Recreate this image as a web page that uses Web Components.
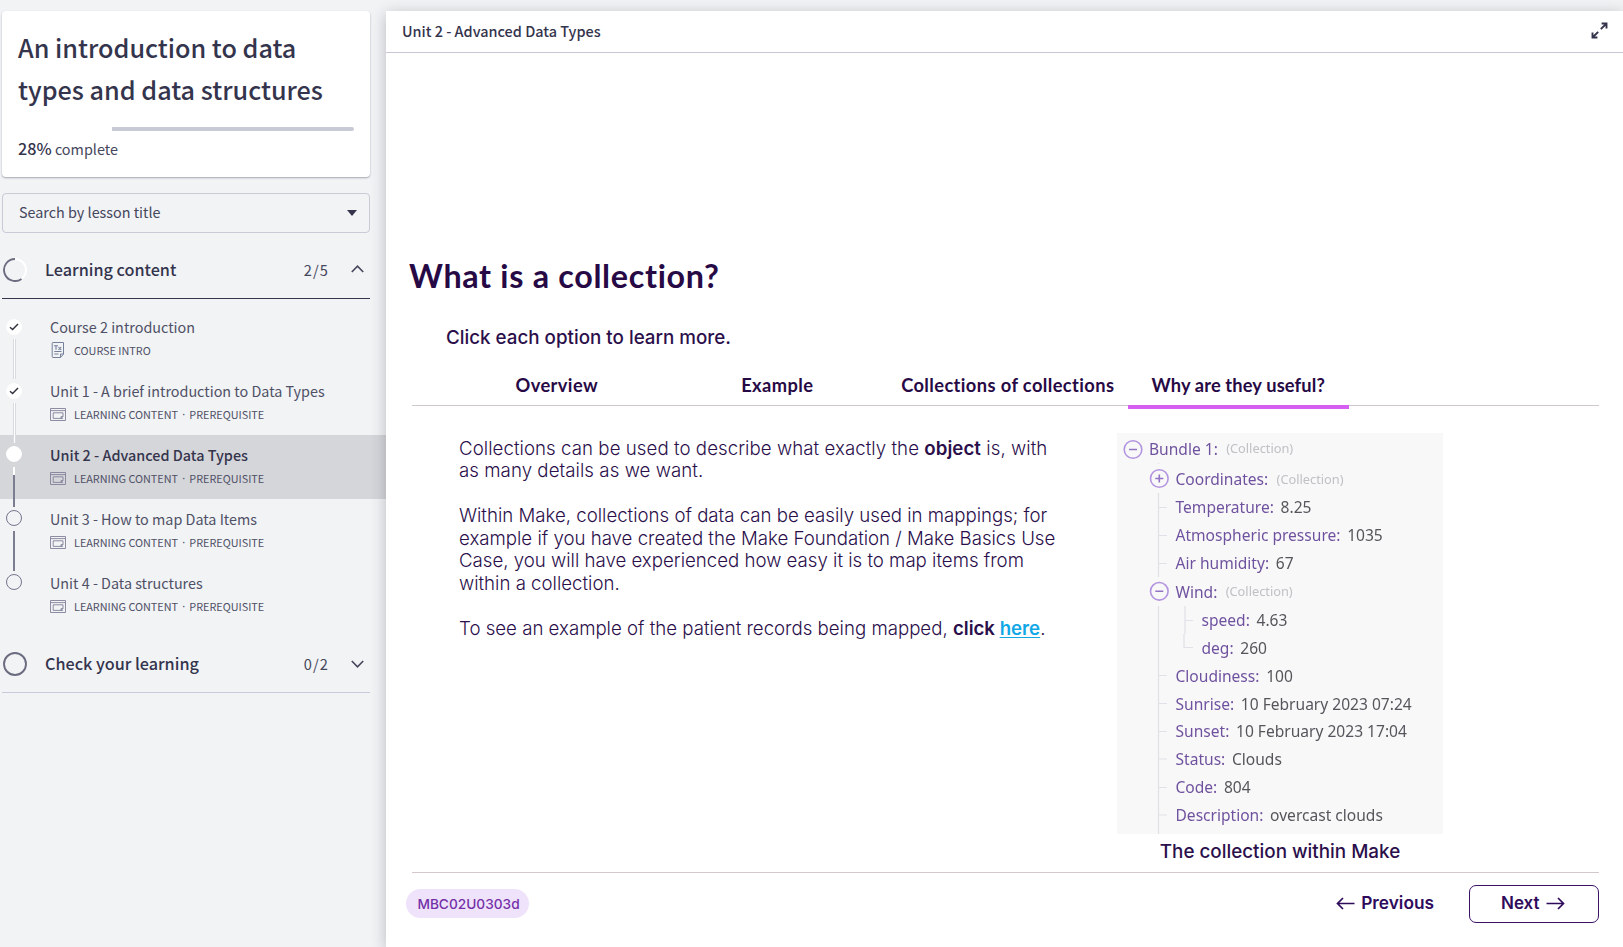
<!DOCTYPE html>
<html lang="en">
<head>
<meta charset="utf-8">
<title>An introduction to data types and data structures</title>
<style>
html,body{margin:0;height:100%;overflow:hidden;background:#f1f3f5}
</style>
</head>
<body>
<course-app></course-app>
<script>
const SANS = '"Noto Sans CJK SC","Noto Sans",sans-serif';
const define = (name, html, setup) => {
  const tpl = document.createElement('template');
  tpl.innerHTML = html;
  customElements.define(name, class extends HTMLElement {
    connectedCallback() {
      if (this.shadowRoot) return;
      const root = this.attachShadow({mode: 'open'});
      root.append(tpl.content.cloneNode(true));
      if (setup) setup(this, root);
    }
  });
};

define('course-card', `
<style>
:host{display:block;box-sizing:border-box;width:368px;height:166px;margin:11px 0 16px 2px;padding:15px 16px 0;background:#fff;border-radius:4px;box-shadow:0 1px 2px rgba(40,42,60,.38)}
h1{margin:0;font-weight:500;font-size:25.2px;line-height:42px;color:#34344d;white-space:nowrap}
.bar{height:4px;margin:17px 0 5px;display:flex}
.bar i{margin-left:94px;flex:1;background:#c8cbd6;border-radius:0 2px 2px 0}
.done{font-size:14.4px;line-height:24px;color:#45465c}
b{font-weight:500;font-size:16.2px;color:#34344d}
</style>
<h1>An introduction to data<br>types and data structures</h1>
<div class="bar"><i></i></div>
<div class="done"><b>28%</b> complete</div>`);

define('lesson-search', `
<style>
:host{display:flex;box-sizing:border-box;align-items:center;justify-content:space-between;width:368px;height:40px;margin-left:2px;padding:0 12px 4px 16px;border:1px solid #c8cad6;border-radius:4px;font-size:14.37px;color:#45465c}
svg{display:block;margin-top:4px}
</style>
<span>Search by lesson title</span>
<svg width="10" height="6"><path d="M0 0h10L5 6z" fill="#34344d"/></svg>`);

define('course-section', `
<style>
:host{display:flex;box-sizing:border-box;align-items:center;width:368px;height:59px;margin:7px 0 0 2px;padding:0 6px 0 1px;border-bottom:1px solid #c8cadc;color:#34344d}
:host([open]){border-color:#34344d}
.ring{margin:2px 18px 0 0}
.name{flex:1;font-size:16.2px;font-weight:500}
.count{font-size:14.6px;letter-spacing:1.1px;margin:0 22px 0 0;color:#45465c}
svg{display:block}
</style>
<svg class="ring" width="24" height="24" fill="none" stroke-width="1.9"></svg>
<span class="name"><slot></slot></span><span class="count"></span>
<svg class="chev" width="13" height="8" fill="none" stroke="#45465c" stroke-width="1.6"><path/></svg>`,
(el, root) => {
  const open = el.hasAttribute('open');
  root.querySelector('.count').textContent = el.getAttribute('count');
  root.querySelector('.chev path').setAttribute('d', open ? 'M.8 7L6.5 1.2 12.2 7' : 'M.8 1L6.5 6.8 12.2 1');
  root.querySelector('.chev').style.marginTop = open ? '0' : '2px';
  root.querySelector('.ring').innerHTML = open
    ? '<circle cx="12" cy="12" r="11" stroke="#fff"/><path d="M12 1A11 11 0 1 0 18.5 20.9" stroke="#6b6c80"/>'
    : '<circle cx="12" cy="12" r="11" stroke="#6b6c80"/>';
});

const LEARNING = '<svg width="16" height="13" fill="none" stroke="#80819a"><path d="M.5.5h15v12H.5zM.5 2.6h15M13 10.400H3.200V4.800H13v3.600l-2 2V8.600h2" stroke-width=".9"/></svg>';
const TEXTDOC = '<svg width="14" height="16" fill="none" stroke="#75809a"><path d="M2 .5h10.5v11.6l-3 3.400H2a.8.8 0 0 1-.8-.8V1.300A.8.8 0 0 1 2 .5zM9.500 15.300V12h3M3.300 9.500h7.200M3.300 12h4.200" /><path d="M3 3.700h4M5 3.700v4M7.500 5.200l2.700 2.700M10.200 5.200L7.500 7.900" stroke-width="1.100"/></svg>';

define('lesson-item', `
<style>
:host{display:flex;box-sizing:border-box;position:relative;width:386px;height:64px;padding:10px 0 0 6px;color:#4f5066}
:host([current]){background:#d5d6da}
.dot{flex:none;width:16px;height:16px;margin:1px 28px 0 0;box-sizing:border-box;border-radius:50%;border:1px solid #74758a;display:grid;place-items:center}
:host([state=done]) .dot{margin-top:2px;background:#fff;border-color:#fff}
:host([current]) .dot{background:#fff;border-color:#fff}
:host(:not([state=done])) .dot svg{display:none}
.link{position:absolute;left:13px;top:32px;width:2px;height:40px;background:#7c7d90;z-index:1}
:host([state=done]) .link{box-sizing:border-box;width:3px;background:#fff;border:solid #d9dadf;border-width:0 1px}
:host([current]) .link{background:linear-gradient(#fff 8px,#7c7d90 8px)}
:host([last]) .link{display:none}
.title{font-size:14.370px;line-height:20px;white-space:nowrap}
:host([current]) .title{font-size:14.400px;font-weight:500;color:#34344d}
.meta{display:flex;align-items:center;margin-top:5px;font-size:10.840px;line-height:16px;white-space:nowrap}
.ic{width:16px;margin-right:8px;display:grid;place-items:center}
.sep{width:11.300px;text-align:center;font-family:"Noto Sans",sans-serif}
svg{display:block}
</style>
<div class="dot"><svg width="10" height="8" fill="none" stroke="#34343f" stroke-width="1.5"><path d="M1 4.200l2.600 2.300L9 1"/></svg></div><i class="link"></i>
<div><div class="title"><slot></slot></div><div class="meta"><span class="ic"></span><span class="kind"></span></div></div>`,
(el, root) => {
  const intro = el.getAttribute('kind') === 'intro';
  root.querySelector('.ic').innerHTML = intro ? TEXTDOC : LEARNING;
  root.querySelector('.kind').textContent = intro ? 'COURSE INTRO' : 'LEARNING CONTENT';
  if (!intro) root.querySelector('.meta').insertAdjacentHTML('beforeend', '<span class="sep">·</span><span>PREREQUISITE</span>');
});

define('slide-tab', `
<style>
:host{display:block;position:relative;width:220.5px;height:32px;text-align:center;font:700 18.300px/25px Lato,sans-serif;letter-spacing:.4px;color:#270a45;white-space:nowrap}
:host([active]){letter-spacing:.13px}
:host([active])::after{content:"";position:absolute;left:0;right:0;top:32px;height:3.800px;background:#d65ff2}
</style><slot></slot>`);

define('tree-row', `
<style>
:host{display:flex;align-items:center;height:28px;padding-left:58.500px;font-size:15.570px;line-height:28px;white-space:nowrap;color:#6f529f}
:host([depth="0"]){padding-left:32px;height:29px;line-height:27px;align-items:flex-start}
:host([depth="2"]){padding-left:84.500px}
.v{margin-left:6.700px;color:#55565c}
.v.type{margin:-1px 0 0 8.300px;font-size:12.800px;color:#c0c0c6}
</style><slot></slot><span class="v"></span>`,
(el, root) => {
  const v = root.querySelector('.v');
  v.textContent = el.getAttribute('value') || '(Collection)';
  if (!el.hasAttribute('value')) v.classList.add('type');
});

define('bundle-tree', `
<style>
:host{display:block;position:relative;box-sizing:border-box;width:326px;height:401px;padding-top:3px;background:#f8f8f8;font-family:"Noto Sans",sans-serif;overflow:hidden}
.rows{filter:blur(.45px)}
svg{position:absolute;left:0;top:0;filter:blur(.4px)}
</style>
<svg width="326" height="401" fill="none">
<g stroke="#e2e1e8" stroke-width="1.200"><path d="M41.500 60v84M41.500 173v228M42 74.500h8M42 102.500h8M42 130.500h8M42 242.500h8M42 270.500h8M42 298.500h8M42 326h8M42 354.500h8M42 382h8M68 173v28M68 187.500h8M67 201v13.500h9M41.500 30v1"/></g>
<g stroke="#b394e0" stroke-width="1.600"><circle cx="16" cy="16.500" r="8.800"/><circle cx="42.300" cy="45.500" r="8.800"/><circle cx="42.300" cy="158.300" r="8.800"/><path stroke="#9273c6" d="M12 16.500h8M38.300 45.500h8M42.300 41.500v8M38.300 158.300h8"/></g>
</svg>
<div class="rows">
<tree-row depth="0">Bundle 1:</tree-row>
<tree-row>Coordinates:</tree-row>
<tree-row value="8.25">Temperature:</tree-row>
<tree-row value="1035">Atmospheric pressure:</tree-row>
<tree-row value="67" style="height:28.500px">Air humidity:</tree-row>
<tree-row style="height:28.500px">Wind:</tree-row>
<tree-row depth="2" value="4.63" style="height:27.900px">speed:</tree-row>
<tree-row depth="2" value="260" style="height:27.900px">deg:</tree-row>
<tree-row value="100" style="height:27.900px">Cloudiness:</tree-row>
<tree-row value="10 February 2023 07:24">Sunrise:</tree-row>
<tree-row value="10 February 2023 17:04" style="height:27.600px">Sunset:</tree-row>
<tree-row value="Clouds">Status:</tree-row>
<tree-row value="804">Code:</tree-row>
<tree-row value="overcast clouds">Description:</tree-row>
</div>`);

define('slide-footer', `
<style>
:host{display:flex;box-sizing:border-box;align-items:center;margin:0 24px 0 20px;padding-top:12px;color:#2f0b5c;font:600 17.300px/20px Inter,sans-serif}
.code{display:grid;box-sizing:border-box;place-items:center;width:123px;height:29px;padding-left:2px;margin-top:-1px;border-radius:15px;background:#efe3fb;color:#7430a8;font-size:13.700px;line-height:22px;font-weight:500}
.prev{display:flex;align-items:center;gap:6px;margin:-2px 35px 0 auto}
.next{display:flex;box-sizing:border-box;align-items:center;gap:6px;width:130px;height:38px;padding:0 0 2px 31px;border:1.500px solid #3a1266;border-radius:7px;font-size:17px}
svg{display:block;flex:none}
</style>
<span class="code">MBC02U0303d</span>
<span class="prev"><svg width="19" height="13" fill="none" stroke="#2f0b5c" stroke-width="1.700"><path d="M18.500 6.500H1.500M7 1L1.500 6.500 7 12"/></svg>Previous</span>
<span class="next">Next<svg width="19" height="13" fill="none" stroke="#2f0b5c" stroke-width="1.700"><path d="M.5 6.500h17M12 1l5.500 5.500L12 12"/></svg></span>`);

define('lesson-slide', `
<style>
:host{display:block;padding-top:203px;color:#2b0f4b;font-family:Inter,sans-serif}
h2{margin:0 0 30px 23px;font:700 32.300px/40px Lato,sans-serif;letter-spacing:.680px;color:#270a45}
.hint{margin:0 0 23px 60px;font-size:18.800px;line-height:24px;font-weight:500}
.tabs{display:flex;margin:0 24px 0 26px;padding-left:34.500px;height:32px;border-bottom:1px solid #cfc8cc}
.body{display:flex;height:466px;margin:0 24px 0 26px;border-bottom:1px solid #d2c8cd}
.copy{box-sizing:border-box;width:705px;padding:31px 0 0 47px;font-size:18.650px;line-height:22.450px;font-weight:300;white-space:nowrap}
.lead{letter-spacing:.060px}
p{margin:0 0 22.450px}
b{font-weight:600}
a{color:#12a8e6;font-weight:600;text-decoration:underline;text-underline-offset:2px}
figure{margin:27px 0 0}
figcaption{margin-top:6px;text-align:center;font-size:18.830px;line-height:24px;font-weight:500}
</style>
<h2>What is a collection?</h2>
<div class="hint">Click each option to learn more.</div>
<div class="tabs"><slide-tab>Overview</slide-tab><slide-tab>Example</slide-tab><slide-tab style="margin-left:10px">Collections of collections</slide-tab><slide-tab active style="margin-left:10px">Why are they useful?</slide-tab></div>
<div class="body"><div class="copy">
<p class="lead">Collections can be used to describe what exactly the <b>object</b> is, with<br>as many details as we want.</p>
<p>Within Make, collections of data can be easily used in mappings; for<br>example if you have created the Make Foundation / Make Basics Use<br>Case, you will have experienced how easy it is to map items from<br>within a collection.</p>
<p>To see an example of the patient records being mapped, <b>click <a>here</a></b>.</p>
</div><figure><bundle-tree></bundle-tree><figcaption>The collection within Make</figcaption></figure></div>
<slide-footer></slide-footer>`);

define('lesson-header', `
<style>
:host{display:flex;box-sizing:border-box;align-items:center;justify-content:space-between;height:42px;padding:0 15px 3px 16px;border-bottom:1px solid #c5c7d6;font-size:14.440px;font-weight:500;color:#34344d}
svg{display:block;margin-top:1px}
</style>
<span><slot></slot></span>
<svg width="17" height="17" fill="none" stroke="#34344d" stroke-width="1.900"><path d="M9.800 7.200L15.500 1.500M10.600 1.500h4.900v4.900M7.200 9.800L1.500 15.500M1.500 10.600v4.900h4.900"/></svg>`);

define('course-app', `
<style>
:host{display:grid;grid-template-columns:386px 1fr;width:1623px;height:947px;overflow:hidden;background:#f1f3f5;font-family:${SANS}}
main{margin-top:11px;background:#fff;box-shadow:0 3px 14px rgba(40,40,50,.28);position:relative;z-index:2}
.list{padding-top:8px}
</style>
<aside><course-card></course-card><lesson-search></lesson-search>
<course-section open count="2/5">Learning content</course-section>
<div class="list">
<lesson-item state="done" kind="intro">Course 2 introduction</lesson-item>
<lesson-item state="done">Unit 1 - A brief introduction to Data Types</lesson-item>
<lesson-item current>Unit 2 - Advanced Data Types</lesson-item>
<lesson-item>Unit 3 - How to map Data Items</lesson-item>
<lesson-item last>Unit 4 - Data structures</lesson-item>
</div>
<course-section count="0/2">Check your learning</course-section></aside>
<main><lesson-header>Unit 2 - Advanced Data Types</lesson-header><lesson-slide></lesson-slide></main>`);
</script>
</body>
</html>
